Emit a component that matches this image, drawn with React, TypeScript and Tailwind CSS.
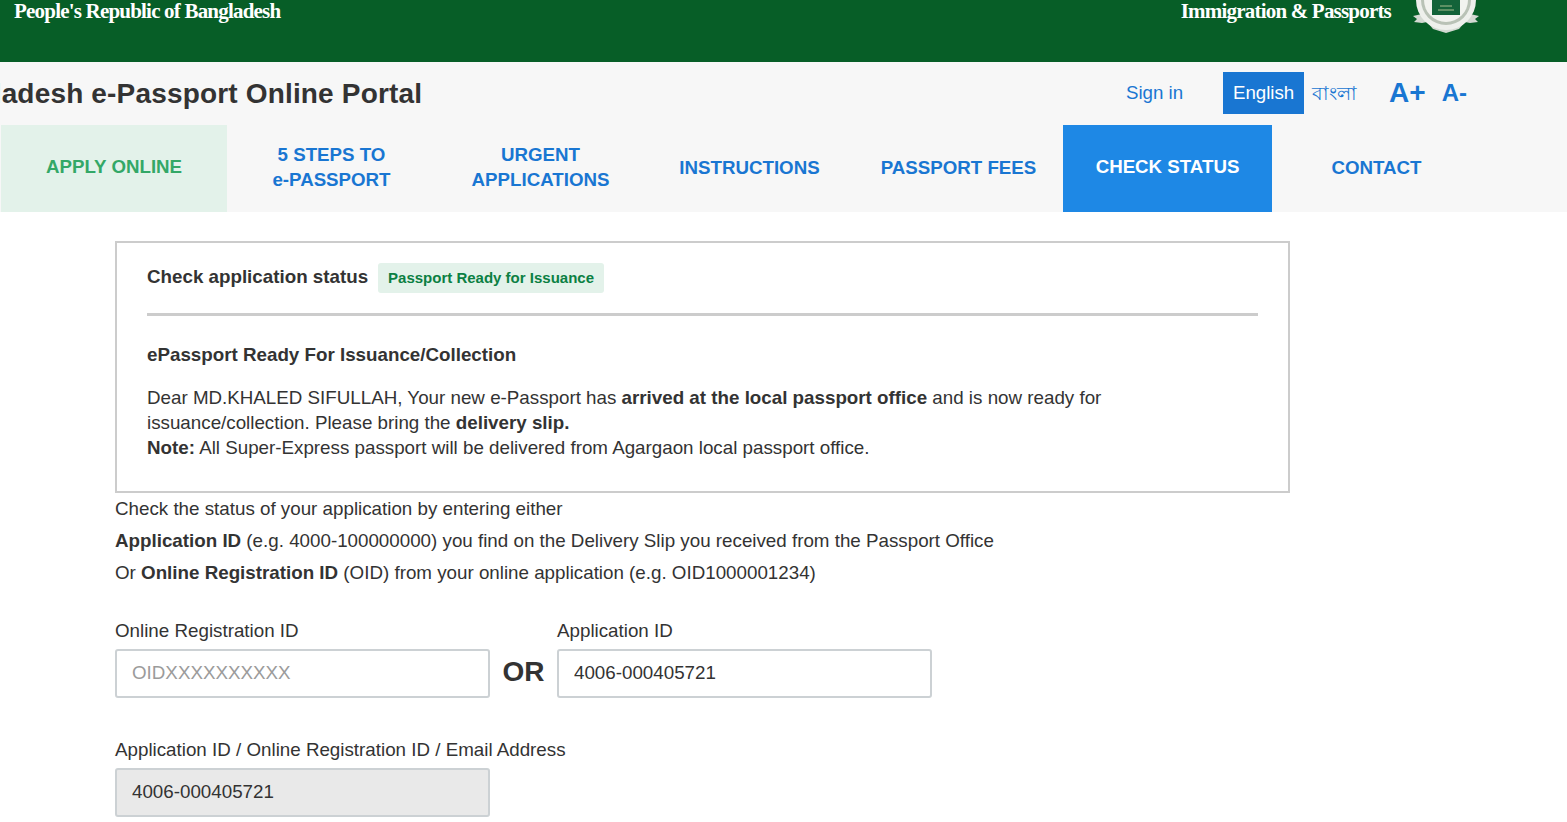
export default function App() {
  const sans = "font-['Liberation_Sans',Arial,sans-serif]";
  const navItem = "flex w-[209px] items-center justify-center pb-[3px] text-center text-[18.72px] leading-[25px] font-bold text-[#1976d2]";
  return (
    <div className={`${sans} h-[822px] overflow-hidden bg-white text-[#333]`}>
      <header className="flex h-[62px] items-start overflow-hidden bg-[#075e27] font-['Liberation_Serif',serif] text-[21px] font-bold leading-[24px] tracking-[-0.8px] text-white">
        <span className="ml-[14px] -mt-[1px]">People's Republic of Bangladesh</span>
        <span className="ml-auto -mt-[1px]">Immigration &amp; Passports</span>
        <svg className="ml-[21px] mr-[87px]" width="68" height="36" viewBox="0 0 68 36">
          <path d="M1 16l9-2 4 5 20 8 20-8 4-5 9 2-4 3 3 3-8 1-5-1-6 7-13 4-13-4-6-7-5 1-8-1 3-3z" fill="#d3d9d2" />
          <circle cx="34" cy="0" r="30" fill="#eef0ec" />
          <circle cx="34" cy="0" r="25" fill="#b9c2b6" />
          <circle cx="34" cy="0" r="22" fill="#f2f3ef" />
          <rect x="20" y="0" width="28" height="15" fill="#136339" />
          <path d="M28 6h12M26 10h16" stroke="#a9bd8f" strokeWidth="1" />
        </svg>
      </header>

      <section className="h-[150px] bg-[#f7f7f7]">
        <div className="flex h-[63px] items-center">
          <h1 className="ml-[-77px] whitespace-nowrap text-[28px] font-bold leading-[62px] tracking-[0.17px]">Bangladesh e-Passport Online Portal</h1>
          <a className="ml-auto text-[18.72px] text-[#1976d2]">Sign in</a>
          <a className="ml-[40px] -mt-[1px] flex h-[42px] w-[81px] items-center justify-center bg-[#1976d2] text-[18.72px] text-white">English</a>
          <a className="ml-[8px] font-['Noto_Sans','Liberation_Sans',sans-serif] text-[18.72px] text-[#1976d2]">বাংলা</a>
          <a className="ml-[32px] -mt-[2px] text-[28px] font-bold text-[#1976d2]">A+</a>
          <a className="ml-[16px] mr-[100px] -mt-[1px] text-[24px] font-bold text-[#1976d2]">A-</a>
        </div>
        <nav className="flex h-[87px] pl-[1px]">
          <a className="flex w-[226px] items-center justify-center bg-[#e3f2ea] pb-[3px] text-[18.72px] font-bold text-[#33a867]">APPLY ONLINE</a>
          <a className={navItem}>5 STEPS TO<br />e-PASSPORT</a>
          <a className={navItem}>URGENT<br />APPLICATIONS</a>
          <a className={navItem}>INSTRUCTIONS</a>
          <a className={navItem}>PASSPORT FEES</a>
          <a className="flex w-[209px] items-center justify-center bg-[#1e88e5] pb-[3px] text-[18.72px] font-bold text-white">CHECK STATUS</a>
          <a className={navItem}>CONTACT</a>
        </nav>
      </section>

      <main className="ml-[115px] pt-[29px] text-[18.78px]">
        <div className="h-[252px] w-[1175px] border-2 border-[#cccccc] px-[30px] pt-[20px]">
          <div className="flex h-[50px] items-start">
            <span className="mt-[1px] text-[18.78px] font-bold leading-[26px]">Check application status</span>
            <span className="ml-[10px] flex h-[30px] items-center rounded-[3px] bg-[#e3f2ea] px-[10px] text-[15px] font-bold text-[#0b8043]">Passport Ready for Issuance</span>
          </div>
          <div className="h-[3px] w-[1111px] bg-[#cccccc]" />
          <h2 className="mt-[26px] text-[18.78px] font-bold leading-[26px]">ePassport Ready For Issuance/Collection</h2>
          <p className="mt-[17px] w-[1000px] leading-[25px]">
            Dear MD.KHALED SIFULLAH, Your new e-Passport has <b>arrived at the local passport office</b> and is now ready for issuance/collection. Please bring the <b>delivery slip.</b><br />
            <b>Note:</b> All Super-Express passport will be delivered from Agargaon local passport office.
          </p>
        </div>
        <p className="leading-[32px]">Check the status of your application by entering either</p>
        <p className="leading-[32px]"><b>Application ID</b> (e.g. 4000-100000000) you find on the Delivery Slip you received from the Passport Office</p>
        <p className="leading-[32px]">Or <b>Online Registration ID</b> (OID) from your online application (e.g. OID1000001234)</p>

        <div className="mt-[28px] flex items-end">
          <label className="block w-[375px]">
            <span className="block leading-[28px]">Online Registration ID</span>
            <input readOnly placeholder="OIDXXXXXXXXXX" className="mt-[4px] block h-[49px] w-[375px] rounded-[3px] border-2 border-[#ccd1d4] bg-white px-[15px] pb-[1px] text-[18.78px] outline-none placeholder:text-[#9b9b9b]" />
          </label>
          <span className="flex h-[49px] w-[67px] items-center justify-center pb-[3px] text-[28px] font-bold">OR</span>
          <label className="block w-[375px]">
            <span className="block leading-[28px]">Application ID</span>
            <input readOnly value="4006-000405721" className="mt-[4px] block h-[49px] w-[375px] rounded-[3px] border-2 border-[#ccd1d4] bg-white px-[15px] pb-[1px] text-[18.78px] text-[#333] outline-none" />
          </label>
        </div>

        <label className="mt-[38px] block w-[375px]">
          <span className="block whitespace-nowrap leading-[28px]">Application ID / Online Registration ID / Email Address</span>
          <input readOnly value="4006-000405721" className="mt-[4px] block h-[49px] w-[375px] rounded-[3px] border-2 border-[#ccd1d4] bg-[#e9e9e9] px-[15px] pb-[1px] text-[18.78px] text-[#333] outline-none" />
        </label>
      </main>
    </div>
  );
}
